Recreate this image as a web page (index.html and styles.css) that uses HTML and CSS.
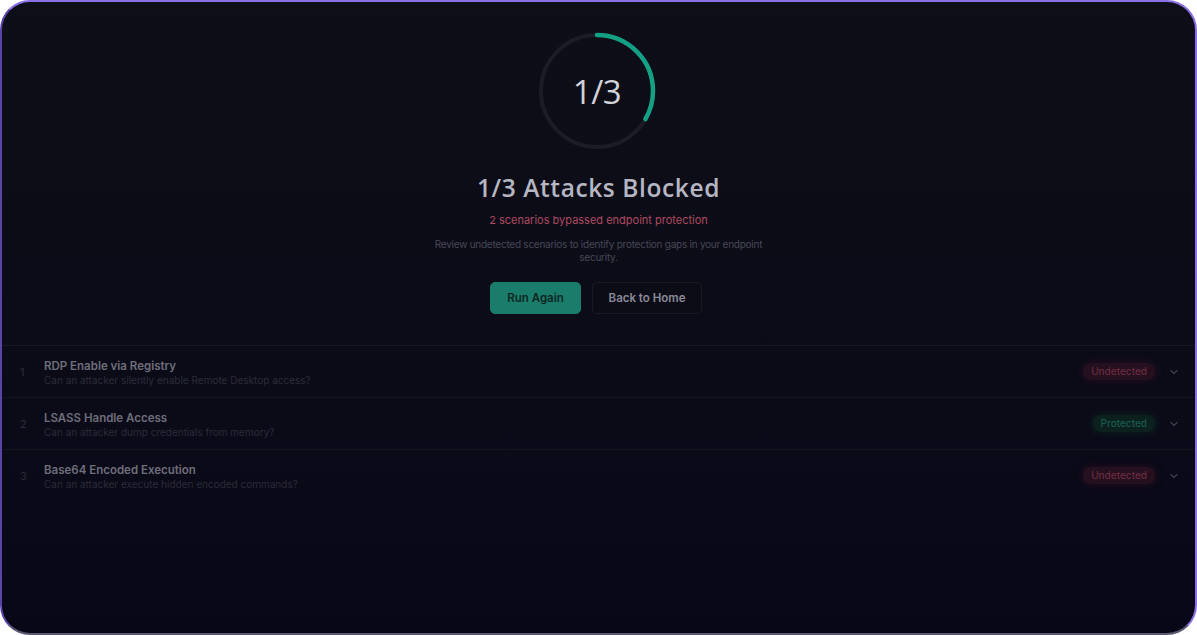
FILE: index.html
```html
<!DOCTYPE html>
<html lang="en">
<head>
<meta charset="utf-8">
<title>Attack Results</title>
<link rel="stylesheet" href="styles.css">
</head>
<body>
<div class="frame">
  <section class="summary">
    <div class="ring">
      <svg width="120" height="120" viewBox="0 0 120 120">
        <circle cx="60" cy="60" r="56" fill="none" stroke="#1c1c26" stroke-width="4"/>
        <circle cx="60" cy="60" r="56" fill="none" stroke="#14a085" stroke-width="4.5" stroke-linecap="round"
          stroke-dasharray="117.3 400" transform="rotate(-90 60 60)"/>
      </svg>
      <span class="ring-value">1/3</span>
    </div>
    <h1 class="title">1/3 Attacks Blocked</h1>
    <p class="alert">2 scenarios bypassed endpoint protection</p>
    <p class="note">Review undetected scenarios to identify protection gaps in your endpoint security.</p>
    <div class="actions">
      <button class="btn btn-primary">Run Again</button>
      <button class="btn btn-ghost">Back to Home</button>
    </div>
  </section>
  <ul class="list">
    <li class="row">
      <span class="num">1</span>
      <div class="info">
        <div class="name">RDP Enable via Registry</div>
        <div class="desc">Can an attacker silently enable Remote Desktop access?</div>
      </div>
      <span class="badge bad">Undetected</span>
      <svg class="chev" width="10" height="10" viewBox="0 0 10 10"><path d="M2 3.5 L5 6.5 L8 3.5" fill="none" stroke="#3a3a4a" stroke-width="1.4" stroke-linecap="round" stroke-linejoin="round"/></svg>
    </li>
    <li class="row">
      <span class="num">2</span>
      <div class="info">
        <div class="name">LSASS Handle Access</div>
        <div class="desc">Can an attacker dump credentials from memory?</div>
      </div>
      <span class="badge good">Protected</span>
      <svg class="chev" width="10" height="10" viewBox="0 0 10 10"><path d="M2 3.5 L5 6.5 L8 3.5" fill="none" stroke="#3a3a4a" stroke-width="1.4" stroke-linecap="round" stroke-linejoin="round"/></svg>
    </li>
    <li class="row">
      <span class="num">3</span>
      <div class="info">
        <div class="name">Base64 Encoded Execution</div>
        <div class="desc">Can an attacker execute hidden encoded commands?</div>
      </div>
      <span class="badge bad">Undetected</span>
      <svg class="chev" width="10" height="10" viewBox="0 0 10 10"><path d="M2 3.5 L5 6.5 L8 3.5" fill="none" stroke="#3a3a4a" stroke-width="1.4" stroke-linecap="round" stroke-linejoin="round"/></svg>
    </li>
  </ul>
</div>
</body>
</html>
```

FILE: styles.css
```css
html, body {
  margin: 0;
  padding: 0;
  background: #ffffff;
}
body {
  width: 1197px;
  height: 635px;
  overflow: hidden;
  font-family: Inter, "Liberation Sans", sans-serif;
}
.frame {
  box-sizing: border-box;
  width: 1197px;
  height: 635px;
  border-radius: 30px;
  border: 2px solid #8a70e4;
  border-bottom-color: #5a5870;
  border-left-color: #5b44a8;
  background: linear-gradient(180deg, #0e0e18 0%, #0c0c18 50%, #080718 100%);
  overflow: hidden;
  display: flex;
  flex-direction: column;
}
.summary {
  display: flex;
  flex-direction: column;
  align-items: center;
  padding-top: 29px;
  height: 343px;
  box-sizing: border-box;
}
.ring {
  position: relative;
  width: 120px;
  height: 120px;
  margin-left: -3px;
}
.ring svg { display: block; }
.ring-value {
  position: absolute;
  inset: 0;
  display: flex;
  align-items: center;
  justify-content: center;
  font-family: "Open Sans", Lato, sans-serif;
  font-size: 33px;
  font-weight: 500;
  color: #d2d2da;
  letter-spacing: -0.5px;
}
.title {
  margin: 22px 0 0;
  font-family: "Open Sans", Lato, sans-serif;
  font-size: 24.5px;
  font-weight: 600;
  color: #b6b6c2;
  letter-spacing: 0.6px;
  line-height: 30px;
}
.alert {
  margin: 9px 0 0;
  font-size: 11px;
  color: #ad4a5f;
  line-height: 16px;
}
.note {
  margin: 10px 0 0;
  width: 330px;
  text-align: center;
  font-size: 10px;
  letter-spacing: -0.25px;
  line-height: 13px;
  color: #474755;
}
.actions {
  display: flex;
  gap: 11px;
  margin-top: 18px;
  margin-left: -5px;
}
.btn {
  height: 32px;
  border-radius: 5px;
  font-family: Inter, "Liberation Sans", sans-serif;
  font-size: 11.5px;
  font-weight: 600;
  cursor: pointer;
}
.btn-primary {
  width: 91px;
  background: #1a7d6b;
  border: 1px solid #1a7d6b;
  color: #0d2622;
}
.btn-ghost {
  width: 110px;
  background: #0c0c16;
  border: 1px solid #1a1a25;
  color: #8a8a98;
}
.list {
  list-style: none;
  margin: 0;
  padding: 0;
}
.row {
  display: flex;
  align-items: center;
  height: 51px;
  border-top: 1px solid #14141e;
  padding: 0 16px 0 18px;
}
.row:first-child { border-top-color: #17172a; }
.num {
  width: 24px;
  font-size: 11px;
  color: #2c2c3a;
  margin-top: 1px;
}
.info {
  flex: 1;
  display: flex;
  flex-direction: column;
  margin-top: 2px;
}
.name {
  font-size: 11.5px;
  font-weight: 600;
  color: #6e6e7a;
  line-height: 15px;
}
.desc {
  font-size: 10px;
  color: #2b2b38;
  line-height: 13px;
}
.badge {
  font-size: 10px;
  font-weight: 500;
  padding: 3px 8px;
  border-radius: 8px;
  line-height: 11px;
}
.badge.bad {
  background: #25101f;
  color: #6a2a3e;
  box-shadow: 0 0 6px 2px #1e0d1c;
}
.badge.good {
  background: #0c201e;
  color: #185a50;
  box-shadow: 0 0 6px 2px #0b1b1b;
}
.chev {
  margin-left: 14px;
}
```
